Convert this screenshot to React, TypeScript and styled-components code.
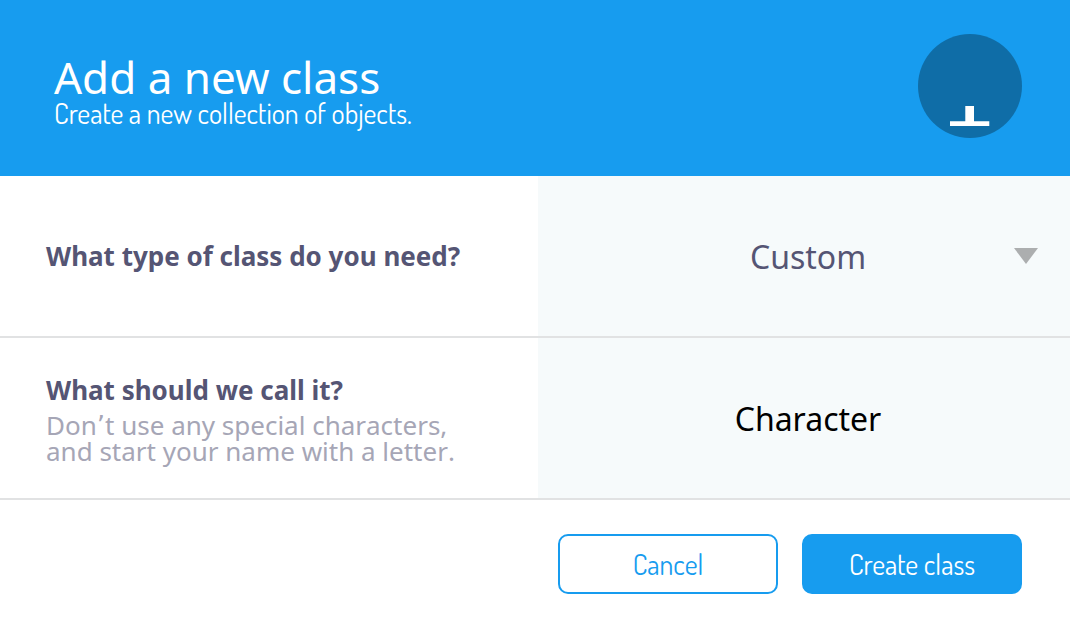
import React from "react";
import styled, { createGlobalStyle } from "styled-components";

const GlobalStyle = createGlobalStyle`
  *, *::before, *::after { box-sizing: border-box; }
  body {
    margin: 0;
    background: #ffffff;
    color: #555574;
    font-family: "Noto Sans", "Open Sans", sans-serif;
  }
`;

const narrowFont = `Dosis, "Liberation Sans Narrow", "Open Sans", sans-serif`;

const Dialog = styled.form`
  display: flex;
  flex-direction: column;
  width: 100%;
`;

const Header = styled.header`
  display: flex;
  align-items: flex-start;
  justify-content: space-between;
  padding: 34px 48px 38px 54px;
  background: #179cef;
  color: #ffffff;
`;

const Heading = styled.div`
  padding-top: 20px;
`;

const Title = styled.h1`
  margin: 0;
  font-size: 44px;
  font-weight: 400;
  line-height: 46px;
`;

const Subtitle = styled.p`
  margin: 0;
  font-family: ${narrowFont};
  font-size: 28px;
  line-height: 26px;
`;

const Badge = styled.svg`
  flex: none;
  width: 104px;
  height: 104px;
`;

const Row = styled.div`
  display: grid;
  grid-template-columns: 538fr 532fr;
  min-height: 162px;
  border-bottom: 2px solid #e1e2e3;
`;

const Prompt = styled.div`
  display: flex;
  flex-direction: column;
  justify-content: center;
  padding: 0 46px;
`;

const Question = styled.label`
  font-size: 26px;
  font-weight: 700;
  line-height: 44px;
  font-kerning: none;
`;

const Hint = styled.p`
  margin: 0;
  padding-bottom: 4px;
  color: #a6a6b6;
  font-size: 26px;
  line-height: 26px;
  font-kerning: none;
`;

const Apostrophe = styled.span`
  font-family: "DejaVu Sans", sans-serif;
  line-height: 0;
`;

const Field = styled.div`
  display: grid;
  grid-template-columns: minmax(0, 1fr);
  align-items: center;
  background: #f6fafb;
`;

const Select = styled.select`
  grid-area: 1 / 1;
  width: 100%;
  height: 100%;
  padding: 0 0 0 8px;
  border: 0;
  background: transparent;
  color: #555574;
  font: inherit;
  font-size: 32px;
  text-align: center;
  text-align-last: center;
  appearance: none;
`;

const Arrow = styled.svg`
  grid-area: 1 / 1;
  justify-self: end;
  width: 24px;
  height: 16px;
  margin-right: 32px;
  pointer-events: none;
`;

const TextInput = styled.input`
  width: 100%;
  height: 100%;
  padding: 0 0 0 8px;
  border: 0;
  background: transparent;
  color: #000000;
  font: inherit;
  font-size: 32px;
  text-align: center;
`;

const Actions = styled.footer`
  display: flex;
  justify-content: flex-end;
  gap: 24px;
  padding: 34px 48px 30px;
`;

const Button = styled.button<{ $primary?: boolean }>`
  width: 220px;
  height: 60px;
  padding: 0;
  border: 2px solid #179cef;
  border-radius: 10px;
  background: ${({ $primary }) => ($primary ? "#179cef" : "#ffffff")};
  color: ${({ $primary }) => ($primary ? "#ffffff" : "#179cef")};
  font-family: ${narrowFont};
  font-size: 28px;
`;

export default function App() {
  return (
    <Dialog onSubmit={(event) => event.preventDefault()}>
      <GlobalStyle />
      <Header>
        <Heading>
          <Title>Add a new class</Title>
          <Subtitle>Create a new collection of objects.</Subtitle>
        </Heading>
        <Badge viewBox="0 0 104 104" aria-hidden="true">
          <circle cx="52" cy="52" r="52" fill="#0f6da7" />
          <path d="M47.3 72H56V87.3H71.3V92H32V87.3H47.3Z" fill="#ffffff" />
        </Badge>
      </Header>
      <Row>
        <Prompt>
          <Question htmlFor="class-type">What type of class do you need?</Question>
        </Prompt>
        <Field>
          <Select id="class-type" defaultValue="custom">
            <option value="custom">Custom</option>
          </Select>
          <Arrow viewBox="0 0 24 16" aria-hidden="true">
            <path d="M0 0H24L12 16Z" fill="#acaeaf" />
          </Arrow>
        </Field>
      </Row>
      <Row>
        <Prompt>
          <Question htmlFor="class-name">What should we call it?</Question>
          <Hint id="class-name-hint">
            Don<Apostrophe>’</Apostrophe>t use any special characters,
            <br />
            and start your name with a letter.
          </Hint>
        </Prompt>
        <Field>
          <TextInput
            id="class-name"
            type="text"
            defaultValue="Character"
            aria-describedby="class-name-hint"
          />
        </Field>
      </Row>
      <Actions>
        <Button type="button">Cancel</Button>
        <Button type="submit" $primary>Create class</Button>
      </Actions>
    </Dialog>
  );
}
